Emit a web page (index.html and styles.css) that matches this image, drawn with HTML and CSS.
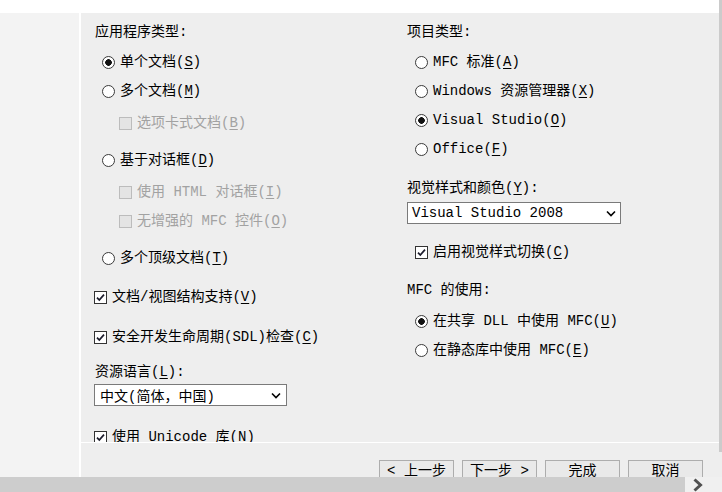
FILE: index.html
```html
<!DOCTYPE html>
<html lang="zh-CN">
<head>
<meta charset="utf-8">
<title>MFC 应用程序</title>
<link rel="stylesheet" href="styles.css">
</head>
<body>
<div class="window">
  <div class="topstrip"></div>
  <div class="middle">
    <div class="side"></div>
    <div class="panel">
      <div class="content">
        <div class="col col-left">
          <div class="row label">应用程序类型:</div>
          <div class="row ind-radio g12"><span class="radio on"></span>单个文档(<u>S</u>)</div>
          <div class="row ind-radio g11"><span class="radio"></span>多个文档(<u>M</u>)</div>
          <div class="row ind-sub g14 disabled"><span class="cb dis"></span>选项卡式文档(<u>B</u>)</div>
          <div class="row ind-radio g19"><span class="radio"></span>基于对话框(<u>D</u>)</div>
          <div class="row ind-sub g14 disabled"><span class="cb dis"></span>使用 HTML 对话框(<u>I</u>)</div>
          <div class="row ind-sub g11 disabled"><span class="cb dis"></span>无增强的 MFC 控件(<u>O</u>)</div>
          <div class="row ind-radio g19"><span class="radio"></span>多个顶级文档(<u>T</u>)</div>
          <div class="row ind-cb g21"><span class="cb"><svg width="11" height="11" viewBox="0 0 11 11"><path d="M2 5.6l2.3 2.4L9 2.6" fill="none" stroke="#1c1c2c" stroke-width="1.7"/></svg></span>文档/视图结构支持(<u>V</u>)</div>
          <div class="row ind-cb g22"><span class="cb"><svg width="11" height="11" viewBox="0 0 11 11"><path d="M2 5.6l2.3 2.4L9 2.6" fill="none" stroke="#1c1c2c" stroke-width="1.7"/></svg></span>安全开发生命周期(SDL)检查(<u>C</u>)</div>
          <div class="row label g17">资源语言(<u>L</u>):</div>
          <div class="select select-lang g3"><span>中文(简体，中国)</span><svg width="10" height="7" viewBox="0 0 10 7"><path d="M1 1.5l4 4 4-4" fill="none" stroke="#000" stroke-width="1.6"/></svg></div>
          <div class="row ind-cb g22"><span class="cb"><svg width="11" height="11" viewBox="0 0 11 11"><path d="M2 5.6l2.3 2.4L9 2.6" fill="none" stroke="#1c1c2c" stroke-width="1.7"/></svg></span>使用 Unicode 库(<u>N</u>)</div>
        </div>
        <div class="col col-right">
          <div class="row label">项目类型:</div>
          <div class="row ind-r g12"><span class="radio"></span>MFC 标准(<u>A</u>)</div>
          <div class="row ind-r g11"><span class="radio"></span>Windows 资源管理器(<u>X</u>)</div>
          <div class="row ind-r g11"><span class="radio on"></span>Visual Studio(<u>O</u>)</div>
          <div class="row ind-r g11"><span class="radio"></span>Office(<u>F</u>)</div>
          <div class="row label g21">视觉样式和颜色(<u>Y</u>):</div>
          <div class="select select-style g5"><span>Visual Studio 2008</span><svg width="10" height="7" viewBox="0 0 10 7"><path d="M1 1.5l4 4 4-4" fill="none" stroke="#000" stroke-width="1.6"/></svg></div>
          <div class="row ind-r g19"><span class="cb"><svg width="11" height="11" viewBox="0 0 11 11"><path d="M2 5.6l2.3 2.4L9 2.6" fill="none" stroke="#1c1c2c" stroke-width="1.7"/></svg></span>启用视觉样式切换(<u>C</u>)</div>
          <div class="row label g20">MFC 的使用:</div>
          <div class="row ind-r g13"><span class="radio on"></span>在共享 DLL 中使用 MFC(<u>U</u>)</div>
          <div class="row ind-r g11"><span class="radio"></span>在静态库中使用 MFC(<u>E</u>)</div>
        </div>
      </div>
      <div class="footer">
        <button class="btn">&lt; 上一步</button>
        <button class="btn">下一步 &gt;</button>
        <button class="btn">完成</button>
        <button class="btn">取消</button>
      </div>
    </div>
  </div>
  <div class="hscroll">
    <div class="track"></div>
    <div class="arrow"><svg width="12" height="14" viewBox="0 0 12 14"><path d="M2.5 1.5l6 5.5-6 5.5" fill="none" stroke="#505050" stroke-width="3"/></svg></div>
  </div>
  <div class="vbar"></div>
</div>
</body>
</html>
```

FILE: styles.css
```css
html, body {
  margin: 0;
  padding: 0;
}
body {
  width: 722px;
  height: 492px;
  overflow: hidden;
  font-family: "Liberation Mono", "Noto Sans CJK SC", monospace;
  font-size: 14px;
  color: #000;
  background: #eeeeee;
}
.window {
  position: relative;
  width: 722px;
  height: 492px;
  display: flex;
  flex-direction: column;
}
.topstrip {
  height: 13px;
  background: #ffffff;
  flex: none;
}
.middle {
  display: flex;
  height: 464px;
  flex: none;
}
.side {
  width: 79px;
  background: #f3f3f3;
  border-right: 2px solid #ffffff;
  flex: none;
}
.panel {
  flex: 1;
  display: flex;
  flex-direction: column;
  background: #eeeeee;
}
.content {
  height: 429px;
  overflow: hidden;
  display: grid;
  grid-template-columns: 312px 1fr;
  padding-left: 14px;
  box-sizing: border-box;
  padding-top: 10px;
}
.col {
  display: flex;
  flex-direction: column;
  align-items: flex-start;
}
.row {
  display: flex;
  align-items: center;
  height: 18px;
  line-height: 18px;
  white-space: pre;
}
.row u {
  text-decoration: underline;
  text-underline-offset: 2px;
}
.disabled {
  color: #a2a2a2;
}
.ind-radio { margin-left: 7px; }
.ind-sub { margin-left: 24px; }
.ind-cb { margin-left: -1px; }
.ind-r { margin-left: 8px; }

.g3 { margin-top: 3px; }
.g5 { margin-top: 5px; }
.g11 { margin-top: 11px; }
.g12 { margin-top: 12px; }
.g13 { margin-top: 13px; }
.g14 { margin-top: 14px; }
.g17 { margin-top: 17px; }
.g19 { margin-top: 19px; }
.g20 { margin-top: 20px; }
.g21 { margin-top: 21px; }
.g22 { margin-top: 22px; }

.radio {
  width: 13px;
  height: 13px;
  box-sizing: border-box;
  border: 1px solid #3a3a3a;
  border-radius: 50%;
  background: #ffffff;
  margin-right: 5px;
  flex: none;
}
.radio.on {
  background: radial-gradient(circle, #111111 0 3px, #ffffff 3.6px);
}
.cb {
  width: 13px;
  height: 13px;
  box-sizing: border-box;
  border: 1px solid #333333;
  background: #ffffff;
  margin-right: 5px;
  flex: none;
  display: flex;
  align-items: center;
  justify-content: center;
}
.cb.dis {
  border-color: #bcbcbc;
  background: #e4e4e4;
}
.select {
  height: 22px;
  box-sizing: border-box;
  border: 1px solid #7a7a7a;
  background: #ffffff;
  display: flex;
  align-items: center;
  justify-content: space-between;
  padding: 0 5px 0 5px;
  white-space: pre;
}
.select-lang {
  width: 193px;
  margin-left: -1px;
}
.select-style {
  width: 214px;
  padding-left: 4px;
  padding-right: 4px;
}
.footer {
  flex: 1;
  border-top: 1px solid #ffffff;
  overflow: hidden;
  display: flex;
  justify-content: flex-end;
  align-items: flex-start;
  gap: 8px;
  padding-top: 17px;
  padding-right: 19px;
  box-sizing: border-box;
}
.btn {
  width: 75px;
  height: 23px;
  flex: none;
  box-sizing: border-box;
  border: 1px solid #adadad;
  background: #e9e9e9;
  font-family: "Liberation Mono", "Noto Sans CJK SC", monospace;
  font-size: 14px;
  line-height: 18px;
  color: #000;
  padding: 0;
  display: flex;
  justify-content: center;
  align-items: flex-start;
  padding-top: 1px;
  white-space: pre;
}
.hscroll {
  height: 15px;
  display: flex;
  flex: none;
}
.track {
  width: 685px;
  background: #cdcdcd;
}
.arrow {
  flex: 1;
  background: #f0f0f0;
  display: flex;
  align-items: center;
  padding-left: 7px;
}
.vbar {
  position: absolute;
  top: 0;
  right: 0;
  width: 3px;
  height: 452px;
  background: #cbcbcb;
}
```
